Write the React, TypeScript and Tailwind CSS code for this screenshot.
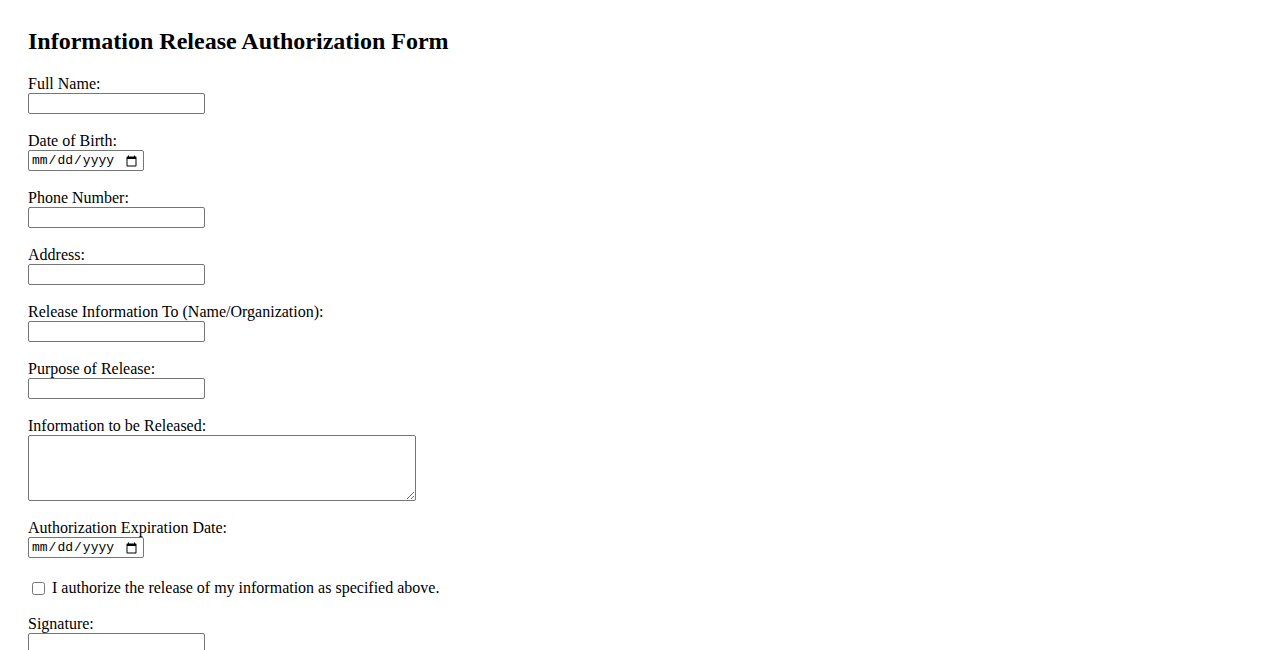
import React from 'react';

const inputCls =
  'block h-[21px] w-[177px] border border-[#767676] rounded-[2px] bg-white px-[2px] text-[13px] font-["Liberation_Sans",sans-serif]';
const dateCls =
  'block h-[21px] w-[116px] border border-[#767676] rounded-[2px] bg-white pl-[2px] pr-[3px] pt-[1px] text-[13px] font-["Liberation_Mono",monospace]';

function Field({ label, children }: { label: string; children: React.ReactNode }) {
  return (
    <div className="mb-[18px]">
      <label className="block h-[18px] leading-[18px]">{label}</label>
      {children}
    </div>
  );
}

export default function App() {
  return (
    <div className='min-h-screen bg-white px-[28px] pt-[27px] text-[16px] text-black font-["Liberation_Serif",serif]'>
      <h2 className="h-[28px] mb-[20px] text-[24px] leading-[28px] font-bold">
        Information Release Authorization Form
      </h2>
      <form className="flex flex-col">
        <Field label="Full Name:">
          <input type="text" className={inputCls} />
        </Field>
        <Field label="Date of Birth:">
          <input type="date" className={dateCls} />
        </Field>
        <Field label="Phone Number:">
          <input type="tel" className={inputCls} />
        </Field>
        <Field label="Address:">
          <input type="text" className={inputCls} />
        </Field>
        <Field label="Release Information To (Name/Organization):">
          <input type="text" className={inputCls} />
        </Field>
        <Field label="Purpose of Release:">
          <input type="text" className={inputCls} />
        </Field>
        <Field label="Information to be Released:">
          <textarea className='block h-[66px] w-[388px] border border-[#767676] rounded-[2px] bg-white p-[2px] text-[13px] font-["Liberation_Mono",monospace]' />
        </Field>
        <div>
          <label className="block h-[18px] leading-[18px]">Authorization Expiration Date:</label>
          <input type="date" className={dateCls} />
        </div>
        <label className="mt-[21px] mb-[18px] flex h-[18px] items-center leading-[18px]">
          <input type="checkbox" className="ml-[4px] mr-[7px] h-[13px] w-[13px]" />
          I authorize the release of my information as specified above.
        </label>
        <Field label="Signature:">
          <input type="text" className={inputCls} />
        </Field>
      </form>
    </div>
  );
}
